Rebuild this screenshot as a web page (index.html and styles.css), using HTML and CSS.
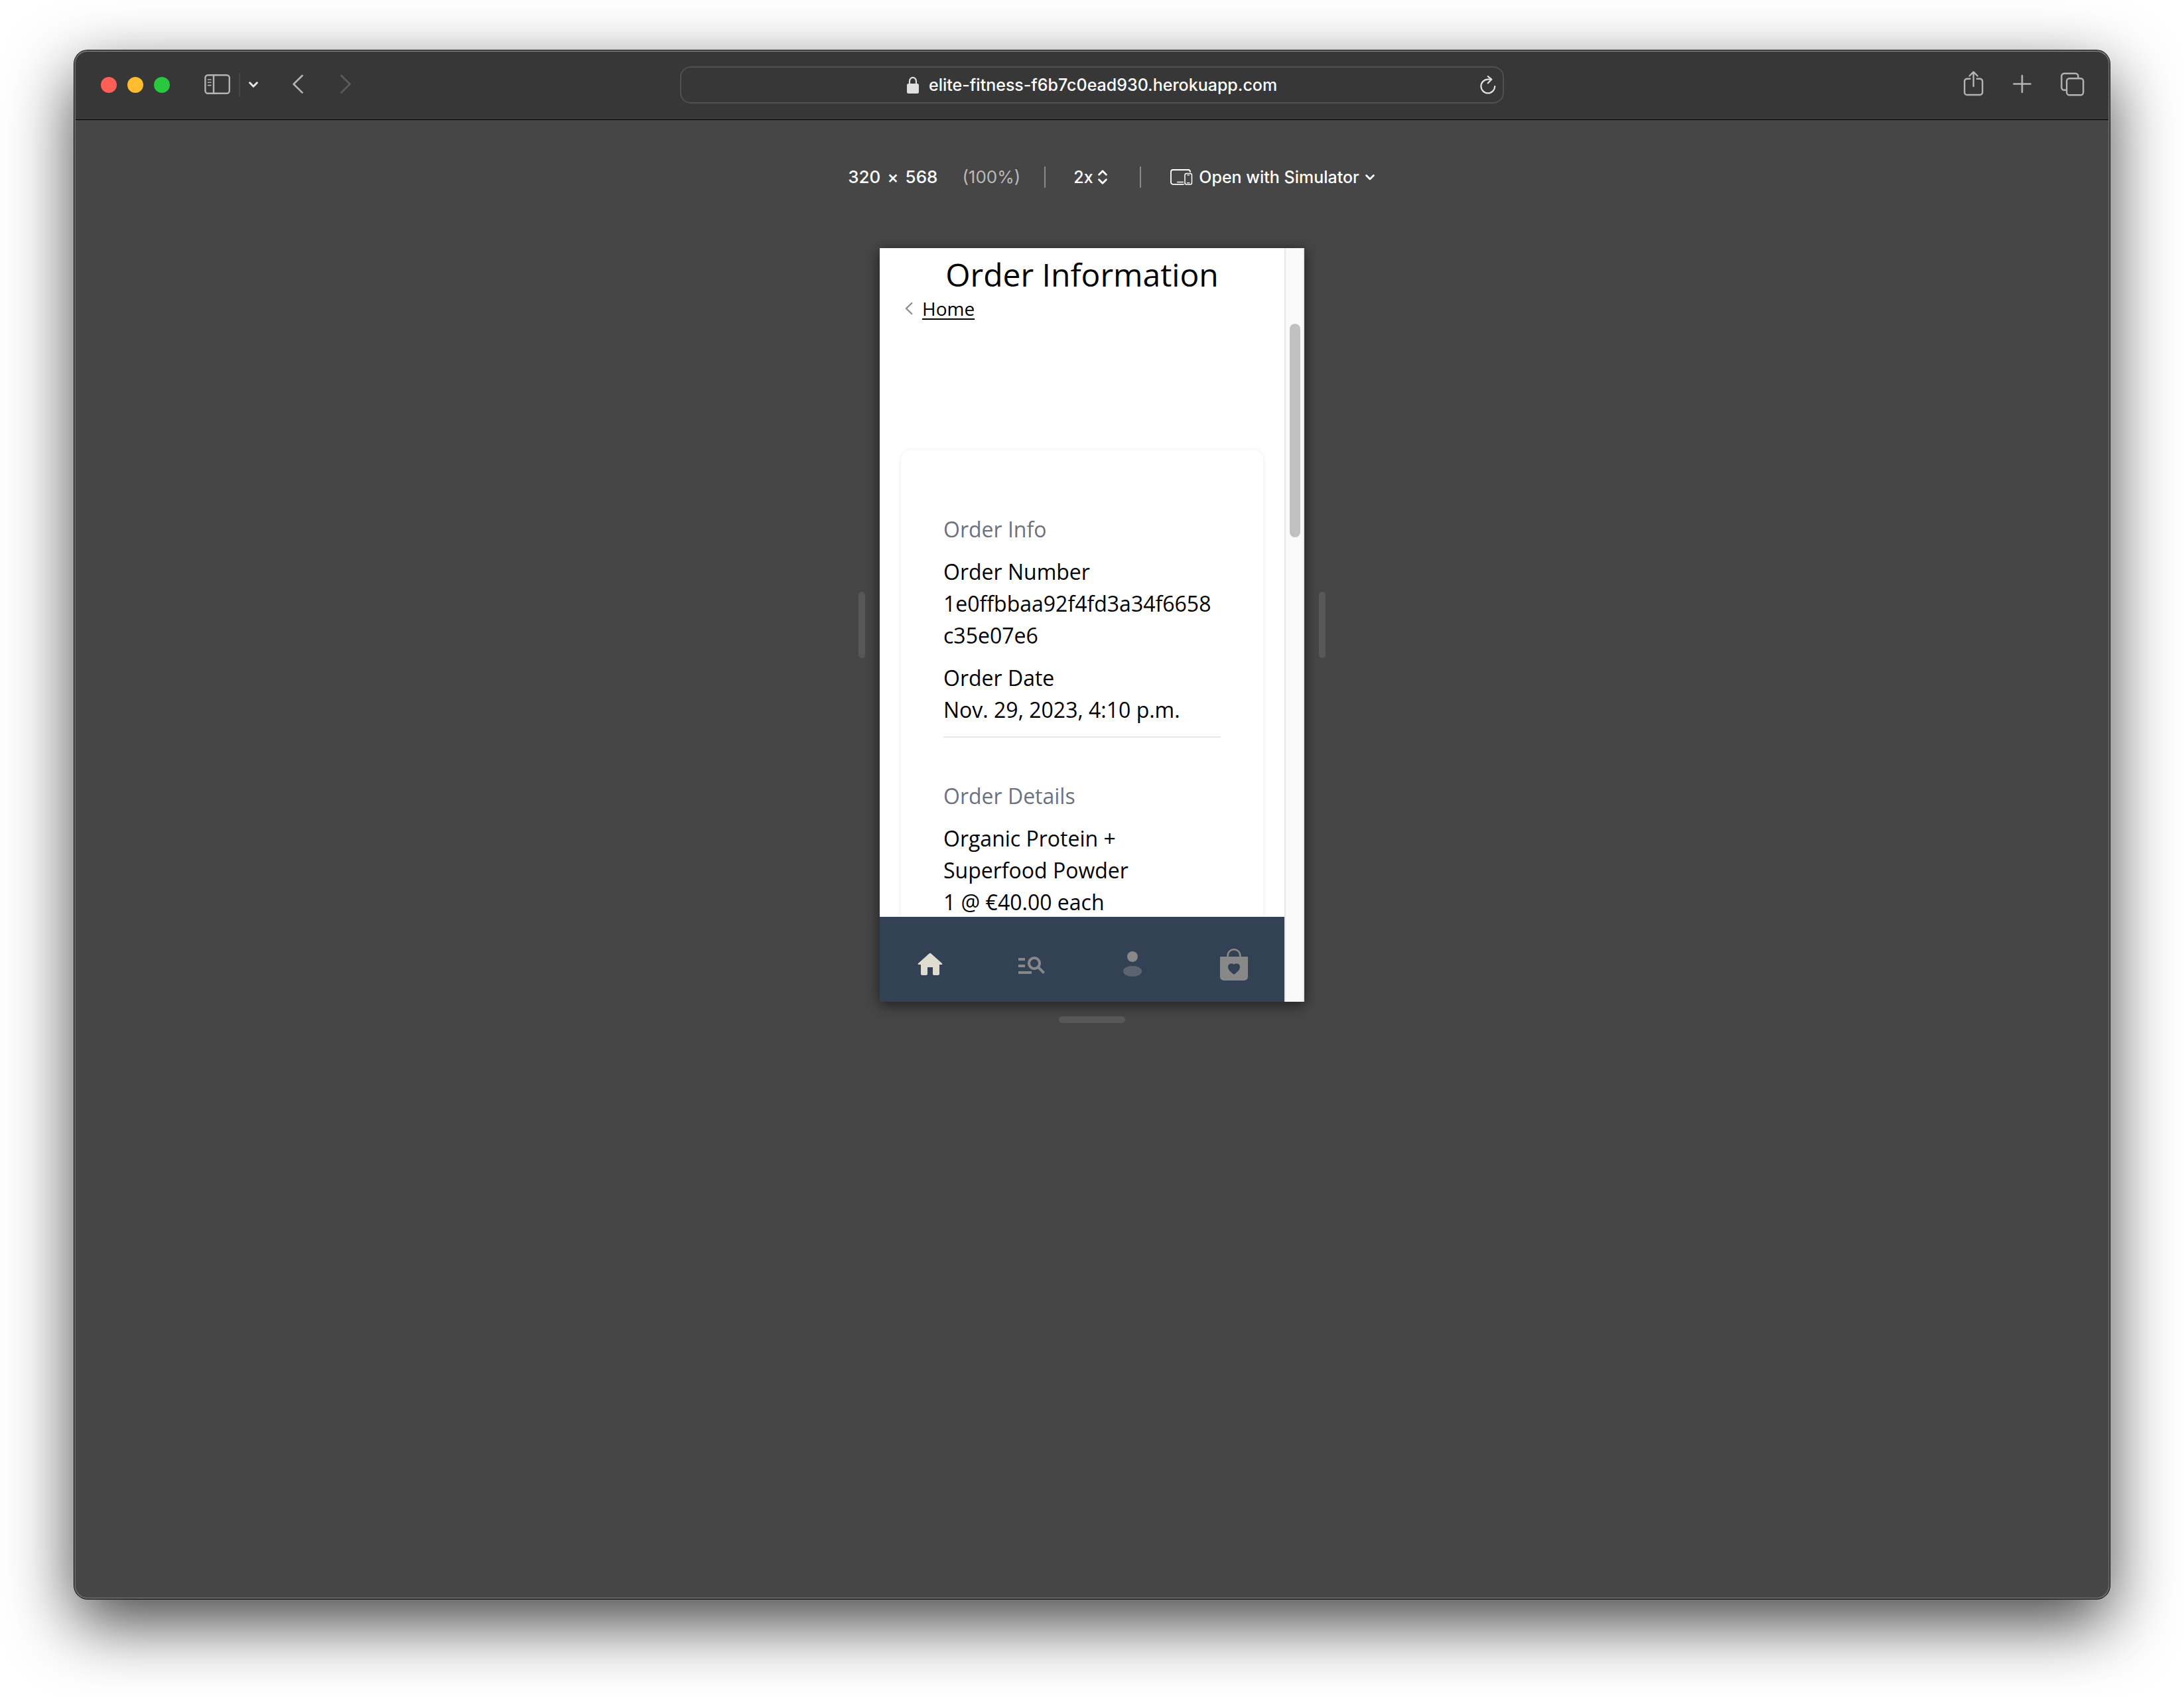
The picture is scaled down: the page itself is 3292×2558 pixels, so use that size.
FILE: index.html
```html
<!DOCTYPE html>
<html lang="en">
<head>
<meta charset="utf-8">
<meta name="viewport" content="width=device-width, initial-scale=1">
<title>Order Information</title>
<link rel="stylesheet" href="styles.css">
</head>
<body>
<div class="window">
  <header class="titlebar">
    <div class="titlebar-left">
      <div class="lights">
        <button class="light light-close" aria-label="Close"></button>
        <button class="light light-minimize" aria-label="Minimize"></button>
        <button class="light light-zoom" aria-label="Zoom"></button>
      </div>
      <button class="icon-button sidebar-button" aria-label="Show sidebar">
        <svg width="40" height="44" viewBox="0 0 40 44" fill="none" stroke="#b4b4b4" stroke-width="2.4" stroke-linecap="round"><rect x="1.4" y="7.2" width="36.4" height="27.6" rx="4"/><path d="M14 7v28"/><path d="M5.5 14h4.5M5.5 18.3h4.5M5.5 22.6h4.5" stroke-width="1.6"/></svg>
      </button>
      <span class="titlebar-divider"></span>
      <button class="icon-button" aria-label="Tab groups">
        <svg width="14" height="44" viewBox="0 0 14 44" fill="none" stroke="#e6e6e6" stroke-width="3" stroke-linecap="round" stroke-linejoin="round"><path d="M1.6 18.8 7 24.2l5.4-5.4"/></svg>
      </button>
      <button class="icon-button back-button" aria-label="Back">
        <svg width="16" height="44" viewBox="0 0 16 44" fill="none" stroke="#b4b4b4" stroke-width="2.6" stroke-linecap="round" stroke-linejoin="round"><path d="M14.6 8 1.6 20.8l13 12.8"/></svg>
      </button>
      <button class="icon-button forward-button" aria-label="Forward">
        <svg width="16" height="44" viewBox="0 0 16 44" fill="none" stroke="#5c5c5c" stroke-width="2.6" stroke-linecap="round" stroke-linejoin="round"><path d="m1.4 8 13 12.8-13 12.8"/></svg>
      </button>
    </div>
    <div class="address">
      <svg width="18" height="26" viewBox="0 0 18 26"><path d="M4 12V7.5a5 5.7 0 0 1 10 0V12" fill="none" stroke="#e0e0e0" stroke-width="2.2"/><rect y="11" width="18" height="15" rx="2.5" fill="#e0e0e0"/></svg>
      <input class="address-input" type="text" aria-label="Address" value="elite-fitness-f6b7c0ead930.herokuapp.com">
      <button class="icon-button reload-button" aria-label="Reload">
        <svg width="24" height="28" viewBox="0 0 24 28" fill="none" stroke="#e0e0e0" stroke-width="2.2" stroke-linecap="round" stroke-linejoin="round"><path d="M22.2 16a10.4 10.4 0 1 1-10.4-10.4h5"/><path d="m11.8 1.2 5.4 4.5-5.4 5.6"/></svg>
      </button>
    </div>
    <div class="titlebar-right">
      <button class="icon-button" aria-label="Share">
        <svg width="30" height="44" viewBox="0 0 30 44" fill="none" stroke="#b4b4b4" stroke-width="2.4" stroke-linecap="round" stroke-linejoin="round"><path d="M9.5 12.8H5a3.8 3.8 0 0 0-3.8 3.8v16.6A3.8 3.8 0 0 0 5 37h19.4a3.8 3.8 0 0 0 3.8-3.8V16.6a3.8 3.8 0 0 0-3.8-3.8h-4.6"/><path d="M14.7 24V3M8.6 8.5l6.1-6.1 6.1 6.1"/></svg>
      </button>
      <button class="icon-button" aria-label="New tab">
        <svg width="28" height="44" viewBox="0 0 28 44" fill="none" stroke="#b4b4b4" stroke-width="2.6" stroke-linecap="round"><path d="M1.5 20.5h25M14 8v25"/></svg>
      </button>
      <button class="icon-button" aria-label="Tab overview">
        <svg width="36" height="44" viewBox="0 0 36 44" fill="none" stroke="#b4b4b4" stroke-width="2.4" stroke-linecap="round"><path d="M8 29.8H5.4a4 4 0 0 1-4-4V8.8a4 4 0 0 1 4-4h17a4 4 0 0 1 4 4v3"/><rect x="9.2" y="12.2" width="25" height="25" rx="4"/></svg>
      </button>
    </div>
  </header>

  <div class="toolbar">
    <span class="size">320 <span class="times">×</span> 568</span>
    <span class="percent">(100%)</span>
    <span class="toolbar-divider"></span>
    <label class="ratio">
      <select class="ratio-select" aria-label="Pixel ratio"><option>2x</option></select>
      <svg width="14" height="24" viewBox="0 0 14 24" fill="none" stroke="#fff" stroke-width="2.8" stroke-linecap="round" stroke-linejoin="round"><path d="m1.6 8.2 5.4-5.4 5.4 5.4M1.6 15.8l5.4 5.4 5.4-5.4"/></svg>
    </label>
    <span class="toolbar-divider"></span>
    <button class="icon-button simulator">
      <svg width="34" height="24" viewBox="0 0 34 24" fill="none" stroke="#fff" stroke-width="1.8" stroke-linecap="round"><path d="M20 22.8H4a3 3 0 0 1-3-3V4a3 3 0 0 1 3-3h23a3 3 0 0 1 3 3"/><path d="M10.5 19.5h9" stroke-width="1.4"/><rect x="22" y="6.5" width="10.5" height="16.5" rx="2.5" stroke-width="1.5"/><path d="M25.8 8.8h2.8M25.3 20.6h3.8" stroke-width="1.2"/></svg>
      <span>Open with Simulator</span>
      <svg width="14" height="12" viewBox="0 0 14 12" fill="none" stroke="#fff" stroke-width="2.8" stroke-linecap="round" stroke-linejoin="round"><path d="M1.6 3.5 7 8.9l5.4-5.4"/></svg>
    </button>
  </div>

  <div class="stage">
    <span class="handle handle-side"></span>
    <div class="device">
      <div class="page">
        <main class="page-content">
          <h1 class="page-title">Order Information</h1>
          <nav class="breadcrumb" aria-label="Breadcrumb">
            <svg width="12" height="20" viewBox="0 0 12 20" fill="none" stroke="#8a8a8a" stroke-width="2.2"><path d="m11 1.2-9 8.8 9 8.8"/></svg>
            <a class="breadcrumb-link" href="#">Home</a>
          </nav>
          <section class="card">
            <h2 class="card-heading">Order Info</h2>
            <div class="field">Order Number<br>1e0ffbbaa92f4fd3a34f6658c35e07e6</div>
            <div class="field">Order Date<br>Nov. 29, 2023, 4:10 p.m.</div>
            <hr class="rule">
            <h2 class="card-heading">Order Details</h2>
            <div class="field">Organic Protein + Superfood Powder<br>1 @ €40.00 each</div>
          </section>
        </main>
        <nav class="tabbar" aria-label="Main">
          <a class="tab tab-active" href="#" aria-label="Home">
            <svg width="48" height="48" viewBox="0 0 24 24" fill="currentColor"><path d="M10 19v-5h4v5c0 .55.45 1 1 1h3c.55 0 1-.45 1-1v-7h1.7c.46 0 .68-.57.33-.87L12.67 3.6c-.38-.34-.96-.34-1.34 0l-8.36 7.53c-.34.3-.13.87.33.87H5v7c0 .55.45 1 1 1h3c.55 0 1-.45 1-1z"/></svg>
          </a>
          <a class="tab" href="#" aria-label="Search">
            <svg width="48" height="48" viewBox="0 0 24 24" fill="currentColor"><path d="M7 9H2V7h5v2zm0 3H2v2h5v-2zm13.59 7l-3.83-3.83c-.8.52-1.74.83-2.76.83-2.76 0-5-2.24-5-5s2.24-5 5-5 5 2.24 5 5c0 1.02-.31 1.96-.83 2.75L22 17.59 20.59 19zM17 11c0-1.65-1.35-3-3-3s-3 1.35-3 3 1.35 3 3 3 3-1.35 3-3zM2 19h10v-2H2v2z"/></svg>
          </a>
          <a class="tab" href="#" aria-label="Account">
            <svg width="48" height="48" viewBox="0 0 24 24" fill="currentColor"><circle cx="12" cy="6" r="4"/><ellipse cx="12" cy="17" rx="7" ry="4" opacity="0.5"/></svg>
          </a>
          <a class="tab" href="#" aria-label="Bag">
            <svg width="48" height="48" viewBox="0 0 24 24" fill="currentColor"><path d="M7.3 7V5.3a4.7 4.7 0 0 1 9.4 0V7" fill="none" stroke="currentColor" stroke-width="1.3"/><path fill-rule="evenodd" d="M1.5 6h21v15.2a2.8 2.8 0 0 1-2.8 2.8H4.3a2.8 2.8 0 0 1-2.8-2.8zM12 19.5c-3.4-2.4-4.5-4-4.5-5.7 0-1.5 1-2.6 2.3-2.6.9 0 1.7.2 2.2.8.5-.6 1.3-.8 2.2-.8 1.3 0 2.3 1.1 2.3 2.6 0 1.7-1.1 3.3-4.5 5.7z"/></svg>
          </a>
        </nav>
      </div>
      <div class="scrollbar"><div class="scrollbar-thumb"></div></div>
    </div>
    <span class="handle handle-side"></span>
    <span class="handle handle-bottom"></span>
  </div>
</div>
</body>
</html>
```
FILE: styles.css
```css
*,
*::before,
*::after {
  box-sizing: border-box;
}

body {
  margin: 0;
  min-height: 100vh;
  display: flex;
  padding: 76px 112px 148px;
  background: #fff;
  color: #fff;
  font: 500 25px/32px Inter, "Liberation Sans", sans-serif;
}

svg {
  display: block;
  flex: none;
}

.window {
  position: relative;
  flex: 1;
  min-width: 0;
  border-radius: 20px;
  background: #464646;
  box-shadow: 0 0 0 1px #000, 0 36px 100px rgba(0, 0, 0, 0.74);
}

/* light rim just inside the window edge */
.window::after {
  content: "";
  position: absolute;
  inset: 0;
  border: 2px solid #686868;
  border-top-color: #757575;
  border-radius: 20px;
  pointer-events: none;
}

.icon-button {
  display: flex;
  align-items: center;
  padding: 0;
  border: 0;
  background: none;
  color: inherit;
  font: inherit;
}

/* title bar */
.titlebar {
  display: grid;
  grid-template-columns: 1fr minmax(0, 1242px) 1fr;
  align-items: center;
  height: 105px;
  padding: 0 38px;
  border-bottom: 1px solid #000;
  border-radius: 20px 20px 0 0;
  background: #373737;
}

.titlebar-left,
.titlebar-right,
.lights {
  display: flex;
  align-items: center;
}

.titlebar-left {
  padding-left: 2px;
}

.lights {
  gap: 16px;
}

.light {
  width: 24px;
  height: 24px;
  padding: 0;
  border: 0;
  border-radius: 50%;
}

.light-close {
  background: #ff5f57;
}

.light-minimize {
  background: #febc2e;
}

.light-zoom {
  background: #28c840;
}

.sidebar-button {
  margin-left: 52px;
}

.titlebar-divider {
  width: 2px;
  height: 36px;
  margin: 0 13px 0 12px;
  background: #464646;
}

.back-button {
  margin-left: 52px;
}

.forward-button {
  margin-left: 56px;
}

.address {
  position: relative;
  display: flex;
  align-items: center;
  justify-content: center;
  gap: 15px;
  height: 56px;
  border: 2px solid #505050;
  border-radius: 16px;
}

.address-input {
  width: 525px;
  padding: 0;
  border: 0;
  outline: 0;
  background: none;
  color: #fff;
  font: inherit;
}

.reload-button {
  position: absolute;
  right: 10px;
}

.titlebar-right {
  justify-content: flex-end;
  gap: 44px;
}

/* responsive design toolbar */
.toolbar {
  display: flex;
  align-items: center;
  justify-content: center;
  padding: 70px 0 91px 58px;
  white-space: pre;
}

.size,
.percent {
  font-size: 26px;
}

.size {
  margin-right: 37px;
}

.times {
  padding: 0 3px;
}

.percent {
  margin-right: 36px;
  color: #b9b9b9;
  font-weight: 400;
}

.toolbar-divider {
  width: 2px;
  height: 32px;
  background: #8a8a8a;
}

.ratio {
  display: flex;
  align-items: center;
  gap: 7px;
  margin: 0 49px 0 42px;
}

.ratio-select {
  appearance: none;
  padding: 0;
  border: 0;
  background: none;
  color: inherit;
  font: inherit;
}

.simulator {
  margin-left: 44px;
  gap: 9px;
}

/* simulated device and its resize handles */
.stage {
  display: grid;
  grid-template-columns: 10px 640px 10px;
  gap: 22px;
  align-items: center;
  justify-content: center;
}

.handle {
  border-radius: 5px;
  background: #585858;
}

.handle-side {
  width: 10px;
  height: 100px;
}

.handle-bottom {
  grid-column: 2;
  justify-self: center;
  width: 100px;
  height: 10px;
}

.device {
  display: flex;
  height: 1136px;
  background: #fff;
  box-shadow: 0 4px 20px rgba(0, 0, 0, 0.6);
  color: #000;
  font: 400 32px/48px "Open Sans", "Noto Sans", sans-serif;
}

.page {
  display: flex;
  flex: 1;
  flex-direction: column;
  min-width: 0;
}

.page-content {
  flex: 1;
  min-height: 0;
  padding: 8px 32px 0;
  overflow: hidden;
}

.page-title {
  margin: 0;
  font-size: 48px;
  font-weight: 400;
  line-height: 64px;
  text-align: center;
}

.breadcrumb {
  display: flex;
  align-items: center;
  gap: 14px;
  padding-left: 6px;
  font-size: 28px;
  line-height: 38px;
}

.breadcrumb-link {
  color: #000;
  text-decoration: underline;
  text-decoration-thickness: 2px;
  text-underline-offset: 4px;
}

.card {
  margin-top: 194px;
  padding: 96px 64px 64px;
  border-radius: 16px;
  box-shadow: 0 1px 6px rgba(0, 0, 0, 0.09);
}

.card-heading {
  margin: 0 0 16px;
  color: #6b7280;
  font-size: 32px;
  font-weight: 400;
  line-height: 48px;
}

.field {
  margin-bottom: 16px;
  overflow-wrap: anywhere;
}

.rule {
  height: 2px;
  margin: 0 0 64px;
  border: 0;
  background: #e5e7eb;
}

.tabbar {
  display: flex;
  height: 128px;
  background: #334155;
}

.tab {
  display: flex;
  flex: 1;
  align-items: center;
  justify-content: center;
  padding-top: 16px;
  color: #888;
}

.tab-active {
  color: #e0dccf;
}

.scrollbar {
  width: 30px;
  padding: 114px 4px 0 6px;
  border: 0 solid #e8e8e8;
  border-width: 0 2px;
  background: #fafafa;
}

.scrollbar-thumb {
  width: 16px;
  height: 322px;
  border-radius: 8px;
  background: #c1c1c1;
}
```
